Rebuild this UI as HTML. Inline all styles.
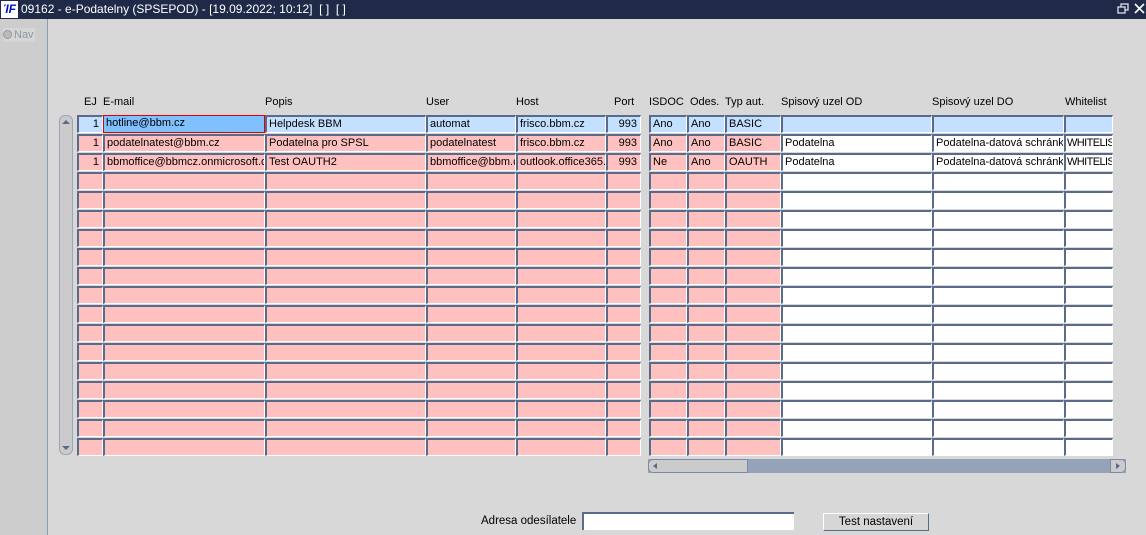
<!DOCTYPE html>
<html><head><meta charset="utf-8"><style>
*{margin:0;padding:0;box-sizing:border-box}
body{width:1146px;height:535px;overflow:hidden;background:#d8d8d8;font-family:"Liberation Sans",Arial,sans-serif;font-size:11px;color:#000;position:relative}
.a{position:absolute}
#title{left:0;top:0;width:1146px;height:19px;background:#1e2a47;color:#fff;font-size:12px;line-height:19px}
#left{left:0;top:19px;width:48px;height:516px;background:#cdcdcd;border-right:1px solid #8a9ab8}
.h{position:absolute;top:96px;font-size:11px;line-height:12px}
.c{position:absolute;height:18px;border-top:2px solid #5a6a8a;border-left:2px solid #5a6a8a;border-right:1px solid #fff;border-bottom:1px solid #fff;background:#ffc0c0;line-height:15px;padding-left:2px;white-space:nowrap;overflow:hidden}
.w{background:#fff}
.b{background:#c4e0ff}
.r{text-align:right;padding-right:3px}
.n{letter-spacing:-0.6px;padding-left:1px}
</style></head><body>
<div id="title" class="a"><span class="a" style="left:1px;top:1px;width:17px;height:17px;background:#fff;color:#0010c0;font-weight:bold;font-style:italic;font-size:12px;line-height:17px;text-align:center">ΊF</span><span class="a" style="left:21px;top:0">09162 - e-Podatelny (SPSEPOD) - [19.09.2022; 10:12] &nbsp;[ ] &nbsp;[ ]</span>
<svg class="a" style="left:1116px;top:2px" width="30" height="14"><rect x="5" y="2" width="7" height="6" fill="none" stroke="#dde" stroke-width="1.3"/><rect x="2" y="5" width="7" height="6" fill="#1e2a47" stroke="#dde" stroke-width="1.3"/><path d="M19 2L28 11M28 2L19 11" stroke="#fff" stroke-width="1.6"/></svg></div>
<div id="left" class="a"><span class="a" style="left:3px;top:9px;width:32px;height:14px;background:#d6d6d6;color:#8a96a8;font-size:11px;line-height:14px"><span style="display:inline-block;width:9px;height:9px;border-radius:50%;background:#bbb;border:1px solid #999;vertical-align:-1px;margin-right:2px"></span>Nav</span></div>
<div class="h" style="left:84px">EJ</div><div class="h" style="left:103px">E-mail</div><div class="h" style="left:265px">Popis</div><div class="h" style="left:426px">User</div><div class="h" style="left:516px">Host</div><div class="h" style="left:614px">Port</div><div class="h" style="left:649px">ISDOC</div><div class="h" style="left:690px">Odes.</div><div class="h" style="left:725px">Typ aut.</div><div class="h" style="left:781px">Spisový uzel OD</div><div class="h" style="left:932px">Spisový uzel DO</div><div class="h" style="left:1065px">Whitelist</div>
<div class="a" style="left:59px;top:115px;width:14px;height:340px;background:#cbcbcb;border:1px solid #9aa6bc;border-radius:6px"></div>
<svg class="a" style="left:60px;top:117px" width="12" height="10"><path d="M2 7L6 3L10 7Z" fill="#5a6a8a"/></svg>
<svg class="a" style="left:60px;top:443px" width="12" height="10"><path d="M2 3L6 7L10 3Z" fill="#5a6a8a"/></svg>
<div id="grid"></div>
<div class="a" style="left:648px;top:459px;width:478px;height:14px;background:#94a3b7"></div>
<div class="a" style="left:648px;top:459px;width:100px;height:14px;background:#cbcbcb;border:1px solid #7a8aa8;border-radius:5px 0 0 5px"></div>
<svg class="a" style="left:650px;top:461px" width="10" height="10"><path d="M7 2L3 5L7 8Z" fill="#5a6a8a"/></svg>
<div class="a" style="left:1110px;top:459px;width:16px;height:14px;background:#cbcbcb;border:1px solid #7a8aa8;border-radius:0 5px 5px 0"></div>
<svg class="a" style="left:1113px;top:461px" width="10" height="10"><path d="M3 2L7 5L3 8Z" fill="#5a6a8a"/></svg>
<div class="a" style="left:481px;top:515px;font-size:11.5px">Adresa odesílatele</div>
<div class="a" style="left:582px;top:512px;width:212px;height:18px;background:#fff;border-top:2px solid #5a6a8a;border-left:2px solid #5a6a8a"></div>
<div class="a" style="left:823px;top:513px;width:106px;height:18px;background:#d6d6d6;border:1px solid #5a6a8a;border-top-color:#fff;border-left-color:#fff;text-align:center;line-height:16px;font-size:11.5px">Test nastavení</div>
<script>
var cols=[[77,26,'r'],[103,162],[265,161],[426,90],[516,90],[606,35,'r'],[649,38],[687,38],[725,56],[781,151,'w'],[932,132,'w'],[1064,49,'w n']];
var data=[["1","hotline@bbm.cz","Helpdesk BBM","automat","frisco.bbm.cz","993","Ano","Ano","BASIC","","",""],
["1","podatelnatest@bbm.cz","Podatelna pro SPSL","podatelnatest","frisco.bbm.cz","993","Ano","Ano","BASIC","Podatelna","Podatelna-datová schránka","WHITELIST1"],
["1","bbmoffice@bbmcz.onmicrosoft.com","Test OAUTH2","bbmoffice@bbm.cz","outlook.office365.com","993","Ne","Ano","OAUTH","Podatelna","Podatelna-datová schránka","WHITELIST1"]];
var h='';
for(var r=0;r<18;r++){var y=115+r*19;for(var i=0;i<cols.length;i++){var c=cols[i];var cl='c'+(c[2]?' '+c[2]:'');var st='left:'+c[0]+'px;top:'+y+'px;width:'+c[1]+'px;';if(r==0){cl+=' b';}
if(r==0&&i==1){st+='background:#80c0ff;border:1px solid #e00000;';}
var t=(data[r]&&data[r][i])||'';h+='<div class="'+cl+'" style="'+st+'">'+t+'</div>';}}
document.getElementById('grid').innerHTML=h;
</script>
</body></html>
